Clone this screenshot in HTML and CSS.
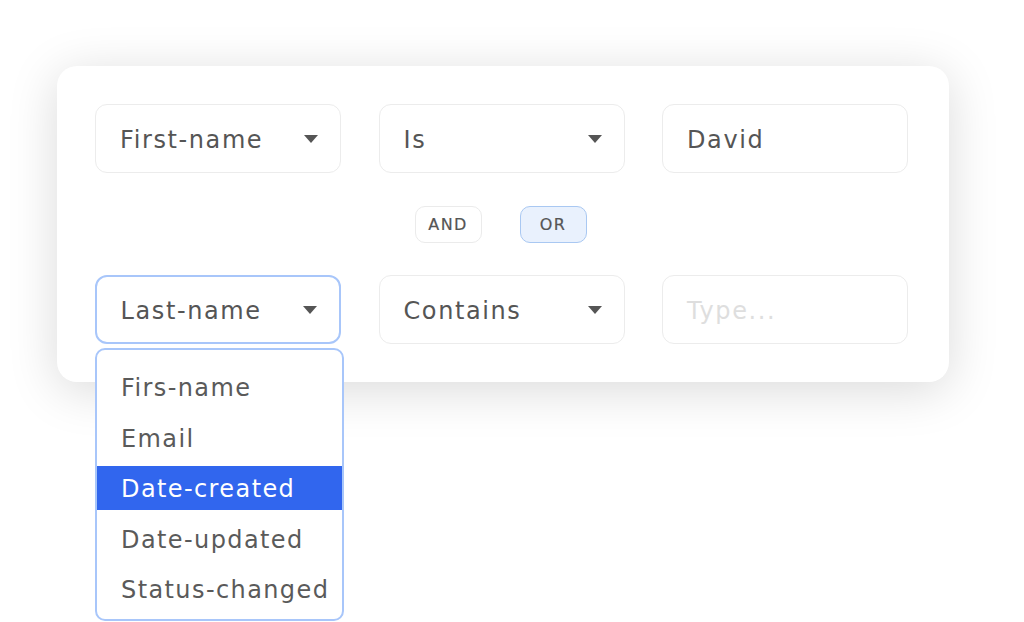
FILE: index.html
```html
<!DOCTYPE html>
<html>
<head>
<meta charset="utf-8">
<link rel="stylesheet" href="styles.css">
</head>
<body>
<div class="card">
  <div class="row">
    <div class="field select"><span>First-name</span><svg class="caret" width="14" height="8" viewBox="0 0 14 8"><path d="M0 0H14L7 8Z"/></svg></div>
    <div class="field select"><span>Is</span><svg class="caret" width="14" height="8" viewBox="0 0 14 8"><path d="M0 0H14L7 8Z"/></svg></div>
    <div class="field"><span>David</span></div>
  </div>
  <div class="logic">
    <div class="pill">AND</div>
    <div class="pill active">OR</div>
  </div>
  <div class="row">
    <div class="field select open"><span>Last-name</span><svg class="caret" width="14" height="8" viewBox="0 0 14 8"><path d="M0 0H14L7 8Z"/></svg>
      <ul class="menu">
        <li>Firs-name</li>
        <li>Email</li>
        <li class="selected">Date-created</li>
        <li>Date-updated</li>
        <li>Status-changed</li>
      </ul>
    </div>
    <div class="field select"><span>Contains</span><svg class="caret" width="14" height="8" viewBox="0 0 14 8"><path d="M0 0H14L7 8Z"/></svg></div>
    <div class="field"><span class="placeholder">Type...</span></div>
  </div>
</div>
</body>
</html>
```
FILE: styles.css
```css
* { box-sizing: border-box; }
html, body { margin: 0; padding: 0; background: #fff; }
body {
  font-family: "DejaVu Sans", "Open Sans", sans-serif;
  color: #555;
  padding: 66px 0 0 57px;
  height: 622px;
  overflow: hidden;
}
.card {
  width: 892px;
  height: 316px;
  background: #fff;
  border-radius: 20px;
  box-shadow: 0 8px 50px rgba(0,0,0,0.15);
  padding: 38px 41px 38px 38px;
  display: flex;
  flex-direction: column;
}
.row {
  display: grid;
  grid-template-columns: 246px 246px 246px;
  column-gap: 37.5px;
}
.field {
  position: relative;
  height: 69px;
  border: 1.5px solid #ececec;
  border-radius: 12px;
  display: flex;
  align-items: center;
  justify-content: space-between;
  padding: 2px 22px 0 24px;
  font-size: 24px;
  letter-spacing: 1.6px;
  color: #555;
}
.field .caret { margin-top: -2px; }
.field.open { border: 2px solid #a8c6fa; padding-left: 23.5px; }
.caret { fill: #555; flex: none; }
.placeholder { color: #dedede; }
.logic {
  display: flex;
  justify-content: center;
  gap: 38px;
  margin: 33px 0 32px;
  padding-right: 2px;
}
.pill {
  width: 67px;
  height: 37px;
  border: 1.5px solid #ebebeb;
  border-radius: 10px;
  display: flex;
  align-items: center;
  justify-content: center;
  font-size: 16px;
  letter-spacing: 1.4px;
  color: #555;
  -webkit-text-stroke: 0.2px #555;
}
.pill.active {
  background: #e9f1fd;
  border-color: #a9c8f2;
}
.menu {
  position: absolute;
  left: -2px;
  top: 70.5px;
  width: 249px;
  height: 273px;
  margin: 0;
  padding: 15.5px 0 0;
  list-style: none;
  background: #fff;
  border: 2px solid #a8c6fa;
  border-radius: 10px;
  display: flex;
  flex-direction: column;
  gap: 6.5px;
  letter-spacing: 1.4px;
  overflow: hidden;
}
.menu li {
  height: 44px;
  display: flex;
  align-items: center;
  padding: 2px 0 0 24px;
  font-size: 24px;
  color: #5a5a5a;
}
.menu li.selected {
  background: #3166ee;
  color: #fff;
}
```
